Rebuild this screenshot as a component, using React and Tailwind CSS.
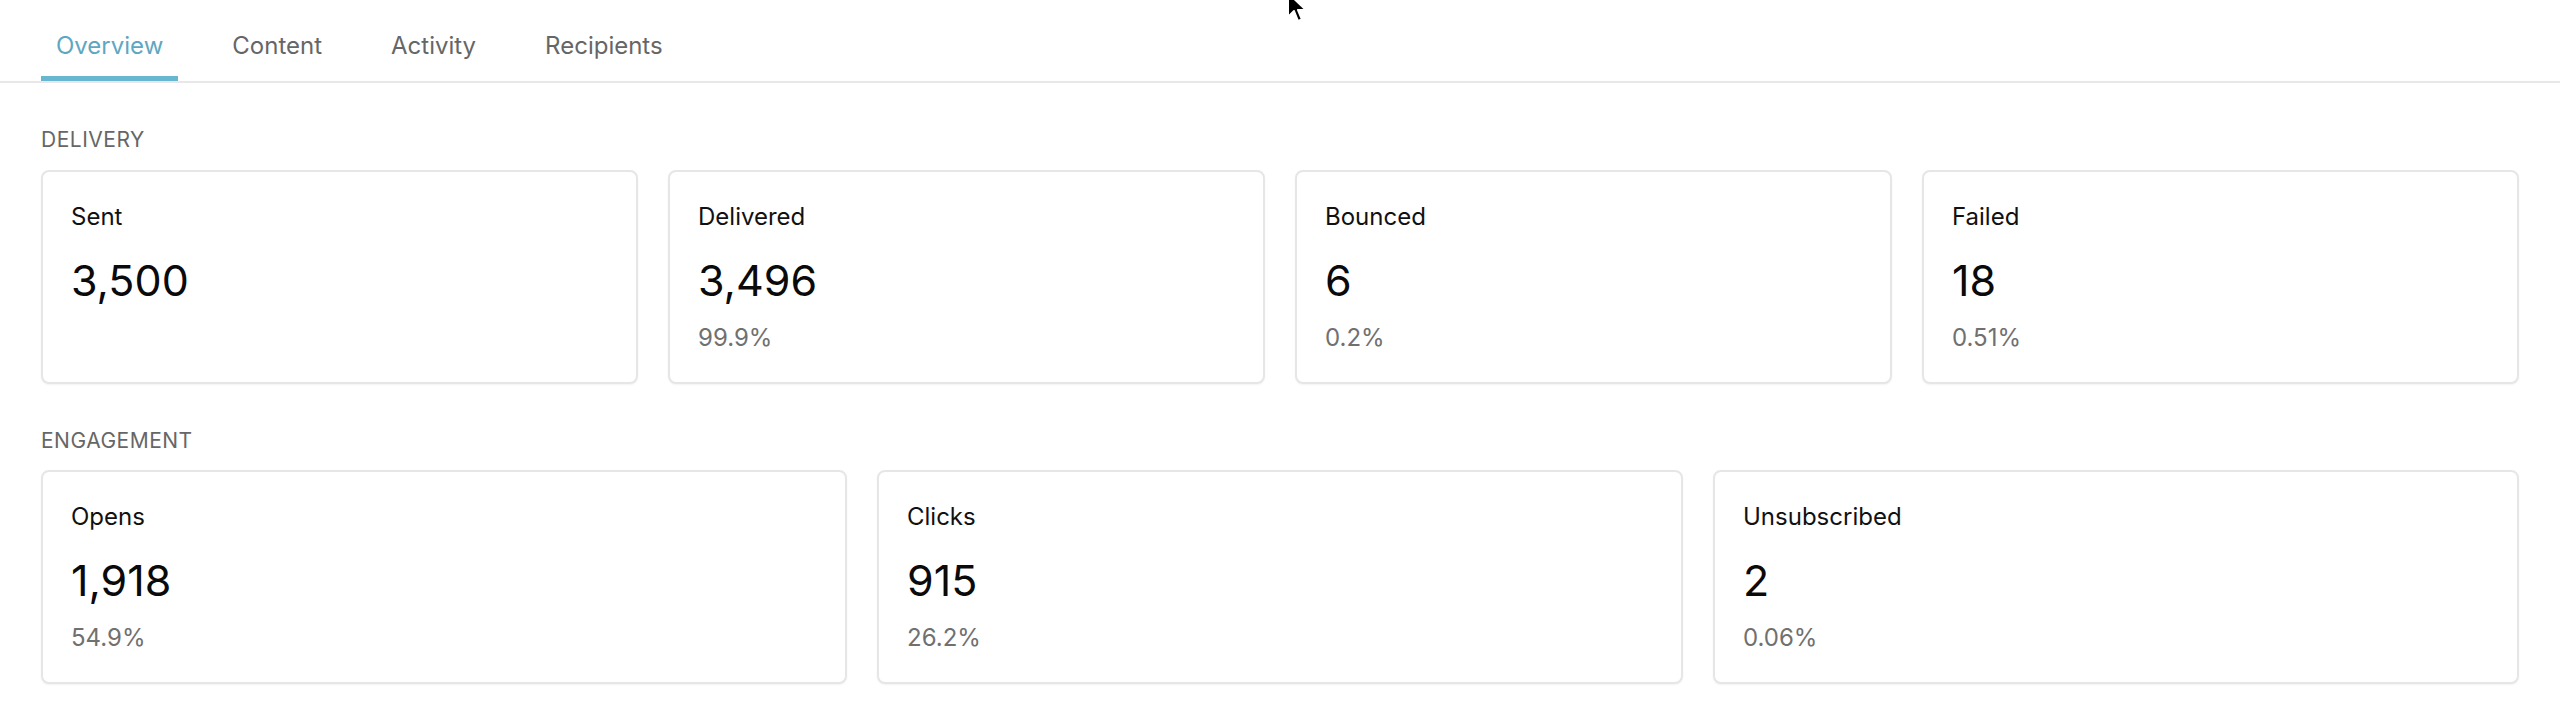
import React from "react";

const tabs = ["Overview", "Content", "Activity", "Recipients"];

const delivery = [
  { label: "Sent", value: "3,500", pct: null },
  { label: "Delivered", value: "3,496", pct: "99.9%" },
  { label: "Bounced", value: "6", pct: "0.2%" },
  { label: "Failed", value: "18", pct: "0.51%" },
];

const engagement = [
  { label: "Opens", value: "1,918", pct: "54.9%" },
  { label: "Clicks", value: "915", pct: "26.2%" },
  { label: "Unsubscribed", value: "2", pct: "0.06%" },
];

function StatCard({ label, value, pct }) {
  return (
    <div className="bg-white border-2 border-[#e6e6e6] rounded-[8px] shadow-[0_1px_2px_rgba(0,0,0,0.05)] pl-[28px] pr-[28px] pt-[29px] pb-[28px] flex flex-col">
      <div className="text-[24px] leading-[32px] text-[#111111]">{label}</div>
      <div className="mt-[21px] text-[43px] leading-[52px] text-[#0a0a0a]">{value}</div>
      {pct && (
        <div className="mt-[16px] text-[24px] leading-[32px] text-[#707070]">{pct}</div>
      )}
    </div>
  );
}

function Section({ title, items, cols, pt, mb }) {
  return (
    <div className={pt}>
      <div className={`text-[21px] leading-[28px] text-[#666666] tracking-[0.5px] ${mb}`}>{title}</div>
      <div className={`grid ${cols} gap-[30px]`}>
        {items.map((it) => (
          <StatCard key={it.label} {...it} />
        ))}
      </div>
    </div>
  );
}

export default function App() {
  return (
    <div className="relative w-[2560px] h-[711px] overflow-hidden bg-white font-['Inter','Noto_Sans',sans-serif]">
      <div className="flex gap-[39px] px-[41px] border-b-2 border-[#e8e8e8]">
        {tabs.map((t, i) => (
          <div
            key={t}
            className={
              i === 0
                ? "px-[15px] pt-[30px] pb-[14px] text-[24px] leading-[32px] text-[#5ea7c2] border-b-[5px] border-[#67b7d1]"
                : "px-[15px] pt-[30px] pb-[14px] text-[24px] leading-[32px] text-[#666666] border-b-[5px] border-transparent"
            }
          >
            {t}
          </div>
        ))}
      </div>
      <div className="px-[41px]">
        <Section title="DELIVERY" items={delivery} cols="grid-cols-4" pt="pt-[43px]" mb="mb-[16px]" />
        <Section title="ENGAGEMENT" items={engagement} cols="grid-cols-3" pt="pt-[43px]" mb="mb-[15px]" />
      </div>
      <svg
        className="absolute left-[1286px] top-[-9px]"
        width="24"
        height="34"
        viewBox="0 0 24 34"
      >
        <path
          d="M2 2 L2 26 L8 20 L12 30 L16 28.5 L12 19 L20 19 Z"
          fill="#000"
          stroke="#fff"
          strokeWidth="2"
          strokeLinejoin="round"
        />
      </svg>
    </div>
  );
}
